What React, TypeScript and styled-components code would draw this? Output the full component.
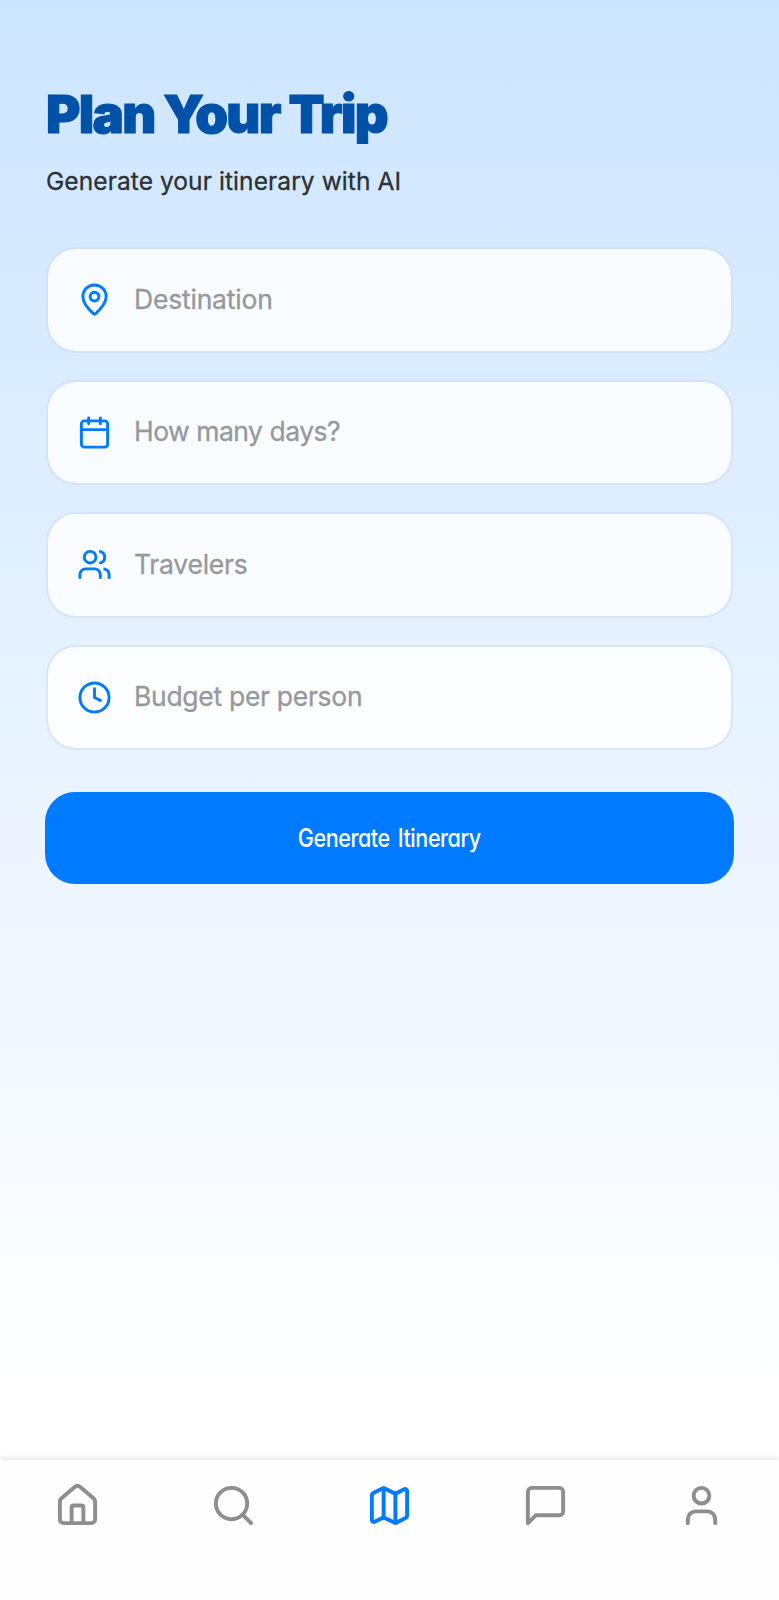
import React from "react";
import styled, { createGlobalStyle } from "styled-components";
import { MapPin, Calendar, Clock, House, Search, Map as MapIcon, User, Users } from "lucide-react";

const GlobalStyle = createGlobalStyle`
  * { box-sizing: border-box; }
  body { margin: 0; font-family: Inter, "Liberation Sans", sans-serif; }
`;

const Screen = styled.div`
  display: flex;
  flex-direction: column;
  width: 100%;
  height: 1600px;
  overflow: hidden;
  background: #fff;
`;

const Content = styled.main`
  flex: 1;
  padding: 82px 46px 0;
  background: linear-gradient(180deg, #cce5ff 0%, #f0f7ff 66%, #ffffff 96%);
`;

const Title = styled.h1`
  margin: 0;
  font-size: 52.5px;
  line-height: 65px;
  font-weight: 900;
  letter-spacing: -1.7px;
  color: #0051a8;
  -webkit-text-stroke: 1.1px #0051a8;
  white-space: nowrap;
`;

const Subtitle = styled.p`
  margin: 19px 0 0;
  font-size: 24.5px;
  line-height: 30px;
  letter-spacing: 0.08px;
  color: #2c3135;
  -webkit-text-stroke: 0.3px #2c3135;
  white-space: nowrap;
`;

const Form = styled.form`
  display: flex;
  flex-direction: column;
  gap: 27px;
  margin-top: 51px;
`;

const Field = styled.label`
  display: flex;
  align-items: center;
  gap: 22px;
  height: 105.5px;
  padding: 0 29px;
  border: 2px solid rgba(205, 218, 243, 0.5);
  border-radius: 30px;
  background: rgba(255, 255, 255, 0.82);
  background-clip: padding-box;
  color: #007aff;

  svg { flex: none; }
`;

const Input = styled.input<{ $tracking: number }>`
  flex: 1;
  min-width: 0;
  padding: 0 0 2px;
  border: 0;
  outline: 0;
  background: transparent;
  font-family: inherit;
  font-size: 26.5px;
  letter-spacing: ${(p) => p.$tracking}px;
  color: #333;

  &::placeholder {
    color: #96989c;
    opacity: 1;
    -webkit-text-stroke: 0.3px #96989c;
  }
`;

const Submit = styled.button`
  height: 92px;
  margin: 14.5px -0.75px 0;
  padding: 0 0 1px;
  border: 0;
  border-radius: 30px;
  background: #007aff;
  color: #fff;
  font-family: inherit;
  font-size: 25.5px;
  font-weight: 550;
`;

const SubmitLabel = styled.span`
  display: inline-block;
  font-feature-settings: "cv11";
  letter-spacing: -0.5px;
  word-spacing: 3px;
  transform: scaleX(0.845);
`;

const NavBar = styled.nav`
  display: flex;
  height: 140px;
  padding-top: 21.5px;
  background: #fefefe;
  box-shadow: 0 -1px 6px rgba(0, 0, 0, 0.13);
  z-index: 1;
`;

const NavItem = styled.a<{ $active?: boolean }>`
  flex: 1;
  display: flex;
  justify-content: center;
  color: ${(p) => (p.$active ? "#007aff" : "#8e8e90")};
`;

const MessageIcon = () => (
  <svg width="47" height="47" viewBox="0 0 24 24" fill="none" stroke="currentColor" strokeWidth="2" strokeLinecap="round" strokeLinejoin="round">
    <path d="M21 15a2 2 0 0 1-2 2H7l-4 4V5a2 2 0 0 1 2-2h14a2 2 0 0 1 2 2z" />
  </svg>
);

const fieldIcon = { size: 35, strokeWidth: 2 };
const navIcon = { size: 47, strokeWidth: 2 };

const fields = [
  { Icon: MapPin, text: "Destination", tracking: -0.2 },
  { Icon: Calendar, text: "How many days?", tracking: -0.5 },
  { Icon: Users, text: "Travelers", tracking: -0.25 },
  { Icon: Clock, text: "Budget per person", tracking: -0.3 },
];

export default function App() {
  return (
    <>
      <GlobalStyle />
      <Screen>
        <Content>
          <Title>Plan Your Trip</Title>
          <Subtitle>Generate your itinerary with AI</Subtitle>
          <Form>
            {fields.map(({ Icon, text, tracking }) => (
              <Field key={text}>
                <Icon {...fieldIcon} />
                <Input placeholder={text} $tracking={tracking} />
              </Field>
            ))}
            <Submit type="button">
              <SubmitLabel>Generate Itinerary</SubmitLabel>
            </Submit>
          </Form>
        </Content>
        <NavBar>
          <NavItem><House {...navIcon} /></NavItem>
          <NavItem><Search {...navIcon} /></NavItem>
          <NavItem $active><MapIcon {...navIcon} /></NavItem>
          <NavItem><MessageIcon /></NavItem>
          <NavItem><User {...navIcon} /></NavItem>
        </NavBar>
      </Screen>
    </>
  );
}
